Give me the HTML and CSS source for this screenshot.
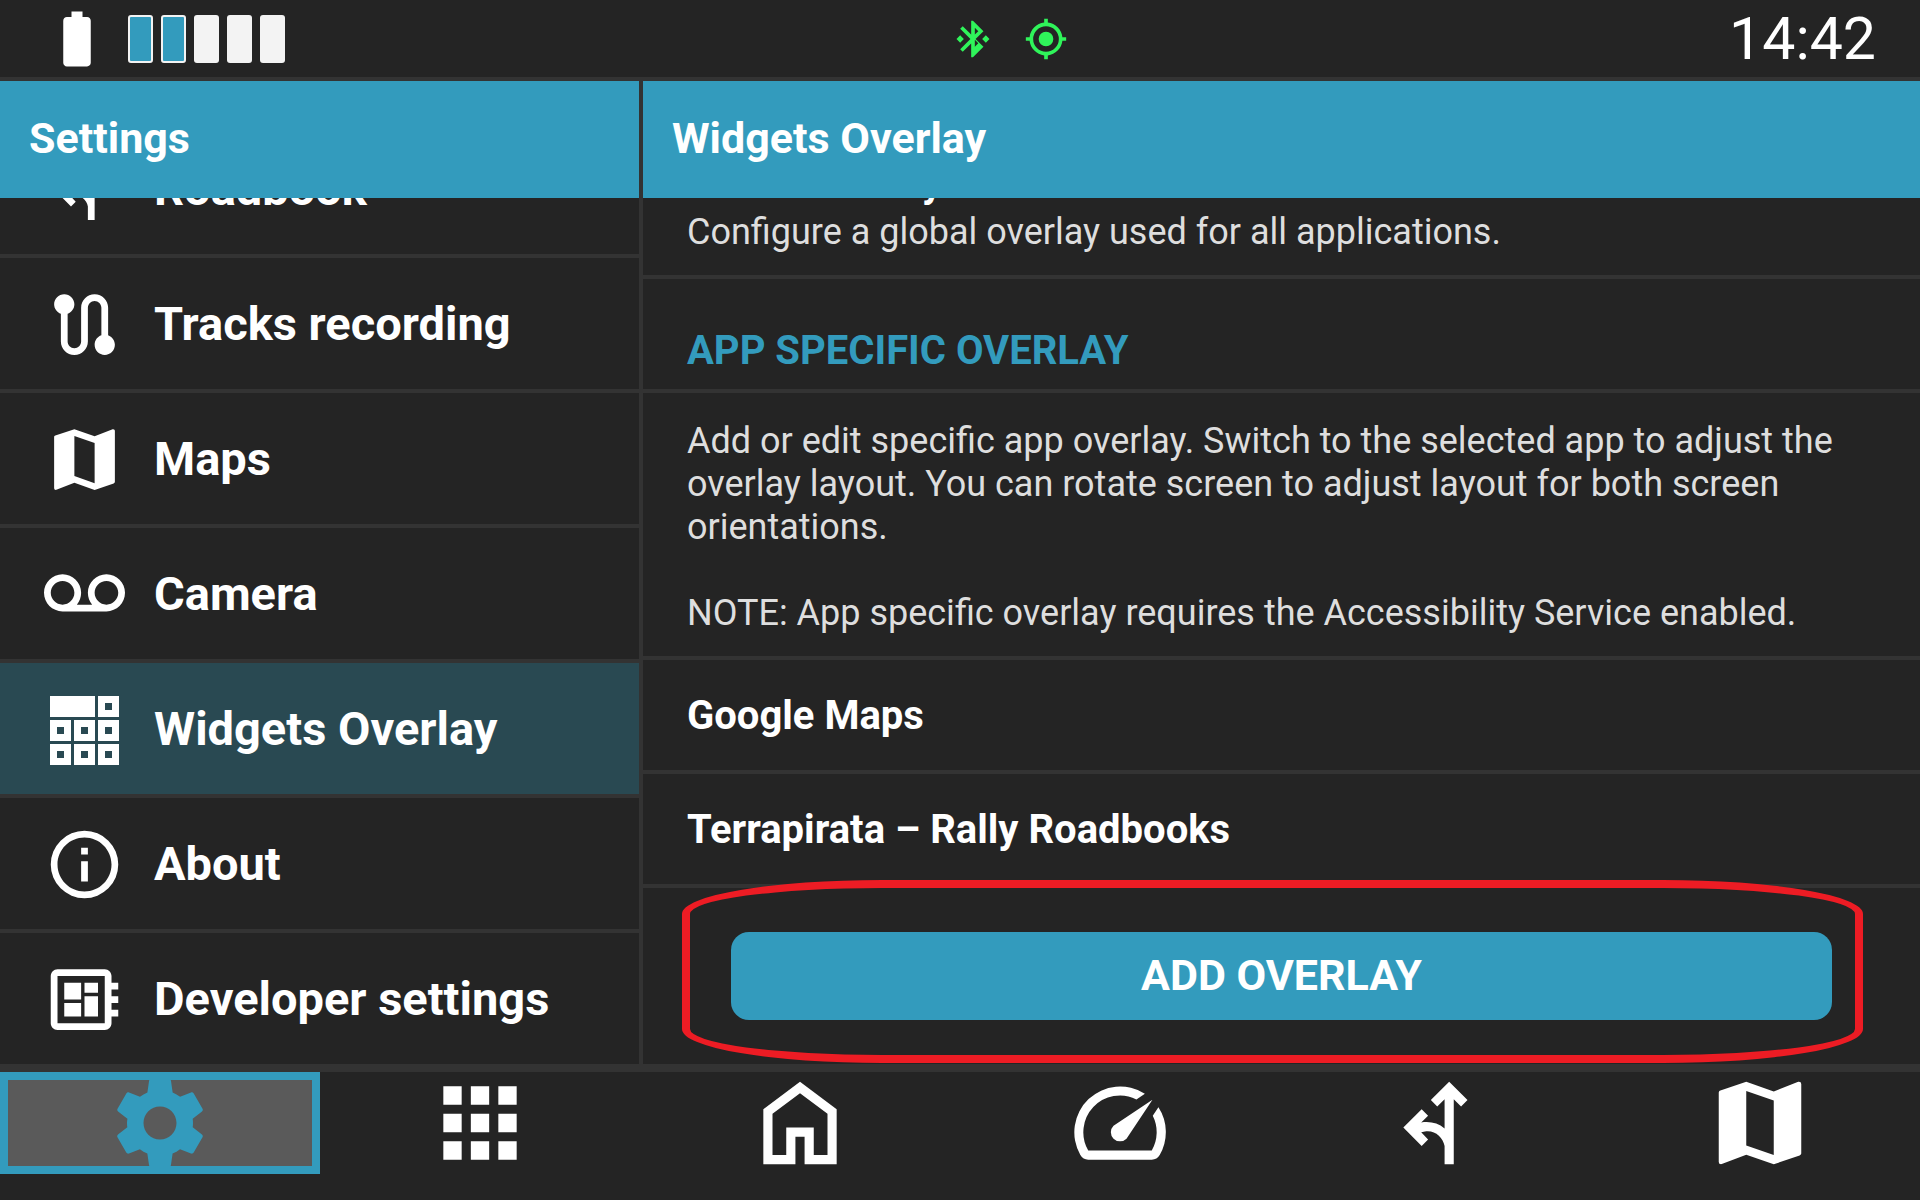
FILE: index.html
```html
<!DOCTYPE html>
<html lang="en">
  <head>
    <meta charset="UTF-8" />
    <meta name="viewport" content="width=device-width, initial-scale=1.0" />
    <title>Widgets Overlay</title>
    <link rel="stylesheet" href="styles.css">
  </head>
  <body>
    <!-- shared icon shapes -->
    <svg class="icon-defs" aria-hidden="true">
      <symbol id="icon-map" viewBox="0 0 24 24">
        <path d="M15,19L9,16.89V5L15,7.11M20.5,3C20.44,3 20.39,3 20.34,3L15,5.1L9,3L3.36,4.9C3.15,4.97 3,5.15 3,5.38V20.5A0.5,0.5 0 0,0 3.5,21C3.55,21 3.61,21 3.66,20.97L9,18.9L15,21L20.64,19.1C20.85,19 21,18.85 21,18.62V3.5A0.5,0.5 0 0,0 20.5,3Z" />
      </symbol>
      <symbol id="icon-roadbook" viewBox="0 0 24 24">
        <path d="M14 3L18 7L16.6 8.4L15 6.8V21H13V17C12.7 15.2 11 13.6 9 13.8L7.9 14L9.4 15.6L8 17L4 13L8 9L9.4 10.4L7.9 11.9C9.8 11.6 11.6 12 13 13.2V6.8L11.4 8.4L10 7Z" />
      </symbol>
    </svg>

    <header class="status-bar">
      <div class="status-left">
        <svg class="battery" viewBox="0 0 24 24">
          <path d="M15.67 4H14V2h-4v2H8.33C7.6 4 7 4.6 7 5.33v15.33C7 21.4 7.6 22 8.33 22h7.33c.74 0 1.34-.6 1.34-1.33V5.33C17 4.6 16.4 4 15.67 4z" />
        </svg>
        <div class="level">
          <span class="bar on"></span>
          <span class="bar on"></span>
          <span class="bar"></span>
          <span class="bar"></span>
          <span class="bar"></span>
        </div>
      </div>
      <div class="status-icons">
        <svg viewBox="0 0 24 24">
          <path d="M19,10L17,12L19,14L21,12M14.88,14.29L13,16.17V12.41M13,5.83L14.88,7.71L13,9.58M17.71,7.71L12,2H11V9.58L6.41,5L5,6.41L10.59,12L5,17.58L6.41,19L11,14.41V22H12L17.71,16.29L13.41,12M7,12L5,10L3,12L5,14L7,12Z" />
        </svg>
        <svg viewBox="0 0 24 24">
          <path d="M12,8A4,4 0 0,1 16,12A4,4 0 0,1 12,16A4,4 0 0,1 8,12A4,4 0 0,1 12,8M3.05,13H1V11H3.05C3.5,6.83 6.83,3.5 11,3.05V1H13V3.05C17.17,3.5 20.5,6.83 20.95,11H23V13H20.95C20.5,17.17 17.17,20.5 13,20.95V23H11V20.95C6.83,20.5 3.5,17.17 3.05,13M12,5A7,7 0 0,0 5,12A7,7 0 0,0 12,19A7,7 0 0,0 19,12A7,7 0 0,0 12,5Z" />
        </svg>
      </div>
      <time class="clock">14:42</time>
    </header>

    <div class="panes">
      <aside class="sidebar">
        <h2 class="pane-title">Settings</h2>
        <nav class="scroll-area">
          <a class="menu-item" href="#roadbook">
            <svg><use href="#icon-roadbook" /></svg>
            Roadbook
          </a>
          <a class="menu-item" href="#tracks">
            <svg viewBox="0 0 24 24">
              <path d="M19 15.18V7c0-2.21-1.79-4-4-4s-4 1.79-4 4v10c0 1.1-.9 2-2 2s-2-.9-2-2V8.82C8.16 8.4 9 7.3 9 6c0-1.66-1.34-3-3-3S3 4.34 3 6c0 1.3.84 2.4 2 2.82V17c0 2.21 1.79 4 4 4s4-1.79 4-4V7c0-1.1.9-2 2-2s2 .9 2 2v8.18c-1.16.41-2 1.51-2 2.82 0 1.66 1.34 3 3 3s3-1.34 3-3c0-1.3-.84-2.4-2-2.82z" />
            </svg>
            Tracks recording
          </a>
          <a class="menu-item" href="#maps">
            <svg><use href="#icon-map" /></svg>
            Maps
          </a>
          <a class="menu-item" href="#camera">
            <svg viewBox="0 0 24 24">
              <path d="M18.5 6C15.46 6 13 8.46 13 11.5c0 1.33.47 2.55 1.26 3.5H9.74c.79-.95 1.26-2.17 1.26-3.5C11 8.46 8.54 6 5.5 6S0 8.46 0 11.5 2.46 17 5.5 17h13c3.04 0 5.5-2.46 5.5-5.5S21.54 6 18.5 6zm-13 9C3.57 15 2 13.43 2 11.5S3.57 8 5.5 8 9 9.57 9 11.5 7.43 15 5.5 15zm13 0c-1.93 0-3.5-1.57-3.5-3.5S16.57 8 18.5 8 22 9.57 22 11.5 20.43 15 18.5 15z" />
            </svg>
            Camera
          </a>
          <a class="menu-item active" href="#widgets">
            <svg viewBox="0 0 81 81">
              <path fill-rule="evenodd" d="M6 7h45v21H6zM54 7h21v21H54zM61 14v7h7v-7zM6 31h21v21H6zM13 38v7h7v-7zM30 31h21v21H30zM37 38v7h7v-7zM54 31h21v21H54zM61 38v7h7v-7zM6 55h21v21H6zM13 62v7h7v-7zM30 55h21v21H30zM37 62v7h7v-7zM54 55h21v21H54zM61 62v7h7v-7z" />
            </svg>
            Widgets Overlay
          </a>
          <a class="menu-item" href="#about">
            <svg viewBox="0 0 24 24">
              <path d="M11,9H13V7H11M12,20C7.59,20 4,16.41 4,12C4,7.59 7.59,4 12,4C16.41,4 20,7.59 20,12C20,16.41 16.41,20 12,20M12,2A10,10 0 0,0 2,12A10,10 0 0,0 12,22A10,10 0 0,0 22,12A10,10 0 0,0 12,2M11,17H13V11H11V17Z" />
            </svg>
            About
          </a>
          <a class="menu-item" href="#developer">
            <svg viewBox="0 0 24 24">
              <path d="M22 9V7h-2V5c0-1.1-.9-2-2-2H4c-1.1 0-2 .9-2 2v14c0 1.1.9 2 2 2h14c1.1 0 2-.9 2-2v-2h2v-2h-2v-2h2v-2h-2V9h2zm-4 10H4V5h14v14zM6 13h5v4H6zm6-6h4v3h-4zM6 7h5v5H6zm6 4h4v6h-4z" />
            </svg>
            Developer settings
          </a>
        </nav>
      </aside>

      <main class="content">
        <h1 class="pane-title">Widgets Overlay</h1>
        <div class="scroll-area">
          <section class="row">
            <h3 class="row-title">Global overlay</h3>
            <p>Configure a global overlay used for all applications.</p>
          </section>
          <h2 class="section-title">APP SPECIFIC OVERLAY</h2>
          <section class="row">
            <p>Add or edit specific app overlay. Switch to the selected app to adjust the overlay layout. You can rotate screen to adjust layout for both screen orientations.</p>
            <p class="note">NOTE: App specific overlay requires the Accessibility Service enabled.</p>
          </section>
          <a class="app-row" href="#google-maps">Google Maps</a>
          <a class="app-row" href="#terrapirata">Terrapirata – Rally Roadbooks</a>
          <div class="add-row">
            <button class="add-btn" type="button">ADD OVERLAY</button>
            <span class="highlight"></span>
          </div>
        </div>
      </main>
    </div>

    <nav class="bottom-nav">
      <a class="tab selected" href="#settings" aria-label="Settings">
        <svg viewBox="0 0 24 24">
          <path d="M19.14 12.94c.04-.3.06-.61.06-.94 0-.32-.02-.64-.07-.94l2.03-1.58c.18-.14.23-.41.12-.61l-1.92-3.32c-.12-.22-.37-.29-.59-.22l-2.39.96c-.5-.38-1.03-.7-1.62-.94l-.36-2.54c-.04-.24-.24-.41-.48-.41h-3.84c-.24 0-.43.17-.47.41l-.36 2.54c-.59.24-1.13.57-1.62.94l-2.39-.96c-.22-.08-.47 0-.59.22L2.74 8.87c-.12.21-.08.47.12.61l2.03 1.58c-.05.3-.09.63-.09.94s.02.64.07.94l-2.03 1.58c-.18.14-.23.41-.12.61l1.92 3.32c.12.22.37.29.59.22l2.39-.96c.5.38 1.03.7 1.62.94l.36 2.54c.05.24.24.41.48.41h3.84c.24 0 .44-.17.47-.41l.36-2.54c.59-.24 1.13-.56 1.62-.94l2.39.96c.22.08.47 0 .59-.22l1.92-3.32c.12-.22.07-.47-.12-.61l-2.01-1.58zM12 15.6c-1.98 0-3.6-1.62-3.6-3.6s1.62-3.6 3.6-3.6 3.6 1.62 3.6 3.6-1.62 3.6-3.6 3.6z" />
        </svg>
      </a>
      <a class="tab" href="#apps" aria-label="Apps">
        <svg viewBox="0 0 24 24">
          <path d="M4 4h4v4H4zM10 4h4v4h-4zM16 4h4v4h-4zM4 10h4v4H4zM10 10h4v4h-4zM16 10h4v4h-4zM4 16h4v4H4zM10 16h4v4h-4zM16 16h4v4h-4z" />
        </svg>
      </a>
      <a class="tab" href="#home" aria-label="Home">
        <svg viewBox="0 0 24 24">
          <path fill-rule="evenodd" d="M12 3L20 9V21H13V15H11V21H4V9ZM12 5.5L6 10V19H9V13H15V19H18V10Z" />
        </svg>
      </a>
      <a class="tab" href="#dashboard" aria-label="Dashboard">
        <svg viewBox="0 0 24 24">
          <path d="M20.38 8.57l-1.23 1.85a8 8 0 0 1-.22 7.58H5.07A8 8 0 0 1 15.58 6.85l1.85-1.23A10 10 0 0 0 3.35 19a2 2 0 0 0 1.72 1h13.85a2 2 0 0 0 1.74-1 10 10 0 0 0-.27-10.44zm-9.79 6.84a2 2 0 0 0 2.83 0l5.66-8.49-8.49 5.66a2 2 0 0 0 0 2.83z" />
        </svg>
      </a>
      <a class="tab" href="#roadbook" aria-label="Roadbook">
        <svg><use href="#icon-roadbook" /></svg>
      </a>
      <a class="tab" href="#maps" aria-label="Maps">
        <svg><use href="#icon-map" /></svg>
      </a>
    </nav>
  </body>
</html>
```
FILE: styles.css
```css
* {
  margin: 0;
  padding: 0;
  box-sizing: border-box;
}

body {
  height: 100vh;
  display: flex;
  flex-direction: column;
  overflow: hidden;
  background: #242424;
  color: #fff;
  font-family: Roboto, sans-serif;
}

a {
  color: inherit;
  text-decoration: none;
}

svg {
  display: block;
  flex-shrink: 0;
  fill: currentColor;
}

.icon-defs {
  position: absolute;
  width: 0;
  height: 0;
}

/* Status bar */
.status-bar {
  height: 81px;
  flex-shrink: 0;
  display: grid;
  grid-template-columns: 50.7% 1fr auto;
  align-items: center;
  padding-right: 44px;
  border-bottom: 4px solid #333;
}

.status-left {
  display: flex;
  align-items: center;
  gap: 18px;
  padding-left: 44px;
}

.battery {
  width: 66px;
  height: 66px;
}

.level {
  display: flex;
  gap: 8px;
}

.bar {
  width: 25px;
  height: 48px;
  border-radius: 3px;
  background: #f3f3f3;
}

.bar.on {
  background: #339bbd;
  border: 2px solid #f3f3f3;
}

.status-icons {
  display: flex;
  gap: 29px;
  color: #2ff45a;
}

.status-icons svg {
  width: 44px;
  height: 44px;
}

.clock {
  font-size: 59px;
  line-height: 72px;
}

/* Two panes */
.panes {
  flex: 1;
  min-height: 0;
  display: grid;
  grid-template-columns: calc(100% / 3 - 1px) 1fr;
}

.sidebar,
.content {
  display: flex;
  flex-direction: column;
  min-width: 0;
  min-height: 0;
}

.content {
  border-left: 4px solid #333;
}

.pane-title {
  height: 117px;
  flex-shrink: 0;
  padding: 0 29px;
  background: #339bbd;
  font-size: 43px;
  line-height: 115px;
}

/* lists are scrolled down to their last row */
.scroll-area {
  flex: 1;
  min-height: 0;
  display: flex;
  flex-direction: column;
  justify-content: flex-end;
  overflow: hidden;
}

.menu-item {
  height: 135px;
  flex-shrink: 0;
  display: flex;
  align-items: center;
  gap: 29px;
  padding-left: 44px;
  border-bottom: 4px solid #333;
  font-size: 47px;
  font-weight: 700;
}

.menu-item:last-child {
  height: 131px;
  border-bottom: none;
}

.menu-item.active {
  background: #294952;
}

.menu-item svg {
  width: 81px;
  height: 81px;
  margin-top: 2px;
}

.row,
.section-title,
.app-row {
  flex-shrink: 0;
  padding: 27px 44px 21px;
  border-bottom: 4px solid #333;
}

.row {
  color: #dedede;
  font-size: 36px;
  line-height: 43px;
}

.row-title {
  margin-bottom: 4px;
  color: #fff;
  font-size: 40px;
  line-height: 47px;
}

.note {
  margin-top: 43px;
}

.section-title {
  padding: 48px 44px 15px;
  color: #339bbd;
  font-size: 40px;
  line-height: 47px;
}

.app-row {
  height: 114px;
  padding: 0 44px;
  font-size: 40px;
  font-weight: 700;
  line-height: 112px;
}

.add-row {
  position: relative;
  flex-shrink: 0;
  padding: 44px 88px;
}

.add-btn {
  display: block;
  width: 100%;
  height: 88px;
  padding-bottom: 2px;
  border: none;
  border-radius: 18px;
  background: #339bbd;
  color: #fff;
  font-family: inherit;
  font-size: 43px;
  font-weight: 700;
}

/* red marker drawn around the button */
.highlight {
  position: absolute;
  top: -8px;
  right: 57px;
  bottom: 1px;
  left: 39px;
  border: 8px solid #ed1c24;
  border-radius: 200px / 34px;
  pointer-events: none;
}

/* Bottom navigation */
.bottom-nav {
  height: 136px;
  flex-shrink: 0;
  display: grid;
  grid-template-columns: repeat(6, 1fr);
  padding-bottom: 26px;
  border-top: 8px solid #333;
}

.tab {
  display: flex;
  align-items: center;
  justify-content: center;
  overflow: hidden;
}

.tab.selected {
  border: 8px solid #339bbd;
  background: #5a5a5a;
  color: #339bbd;
}

.tab svg {
  width: 110px;
  height: 110px;
}
```
